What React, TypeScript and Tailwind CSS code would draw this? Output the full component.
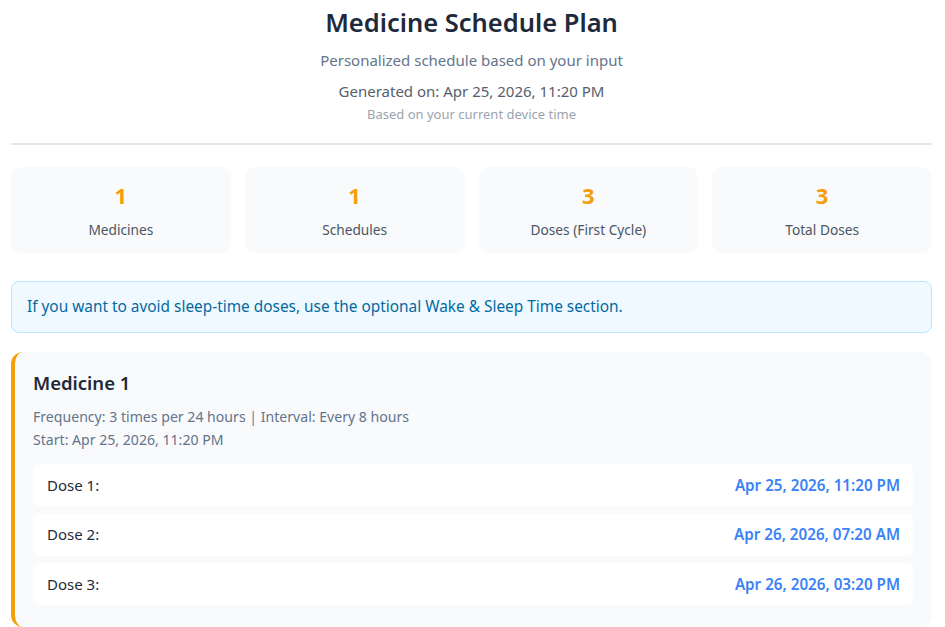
import React from 'react'

const stats = [
  { value: 1, label: 'Medicines' },
  { value: 1, label: 'Schedules' },
  { value: 3, label: 'Doses (First Cycle)' },
  { value: 3, label: 'Total Doses' },
]

const doses = [
  { label: 'Dose 1:', time: 'Apr 25, 2026, 11:20 PM' },
  { label: 'Dose 2:', time: 'Apr 26, 2026, 07:20 AM' },
  { label: 'Dose 3:', time: 'Apr 26, 2026, 03:20 PM' },
]

function App() {
  return (
    <div className="min-h-screen bg-white font-['Segoe_UI','Noto_Sans',sans-serif] pl-[11px] pr-[13px] pt-[3px]">
      <header className="text-center pb-[20px] border-b-2 border-[#e2e8f0]">
        <h1 className="text-[25.5px] leading-[38px] font-semibold text-[#1e293b]">Medicine Schedule Plan</h1>
        <p className="mt-[9px] text-[15px] leading-[20px] text-[#64748b]">Personalized schedule based on your input</p>
        <p className="mt-[11px] text-[15px] leading-[20px] text-[#56606e]">Generated on: Apr 25, 2026, 11:20 PM</p>
        <p className="mt-[4px] text-[13px] leading-[18px] text-[#9ca3af]">Based on your current device time</p>
      </header>

      <div className="grid grid-cols-4 gap-[14px] mt-[22px]">
        {stats.map((s) => (
          <div key={s.label} className="bg-[#f8fafc] rounded-[10px] h-[86px] flex flex-col items-center justify-center">
            <div className="text-[22px] leading-[28px] font-bold text-[#f59e0b]">{s.value}</div>
            <div className="mt-[11px] text-[13.7px] leading-[20px] text-[#4b5563]">{s.label}</div>
          </div>
        ))}
      </div>

      <div className="mt-[28px] bg-[#f0f9ff] border border-[#bae6fd] rounded-[8px] px-[15px] h-[52px] flex items-center text-[15.4px] text-[#0369a1]">
        If you want to avoid sleep-time doses, use the optional Wake &amp; Sleep Time section.
      </div>

      <div className="mt-[19px] bg-[#f8fafc] border-l-4 border-[#f59e0b] rounded-[12px] pl-[18px] pr-[19px] pt-[18px] pb-[22px]">
        <h2 className="text-[18.5px] leading-[26px] font-semibold text-[#1f2937]">Medicine 1</h2>
        <p className="mt-[9px] text-[14.1px] leading-[23px] text-[#64748b]">
          Frequency: 3 times per 24 hours | Interval: Every 8 hours
        </p>
        <p className="text-[14.1px] leading-[23px] text-[#64748b]">Start: Apr 25, 2026, 11:20 PM</p>
        <div className="mt-[13px] flex flex-col gap-[7.5px]">
          {doses.map((d) => (
            <div key={d.label} className="bg-white rounded-[6px] h-[42px] pl-[14px] pr-[13px] flex items-center justify-between">
              <span className="text-[15px] text-[#1f2937]">{d.label}</span>
              <span className="text-[15.2px] font-semibold text-[#3b82f6]">{d.time}</span>
            </div>
          ))}
        </div>
      </div>
    </div>
  )
}

export default App
